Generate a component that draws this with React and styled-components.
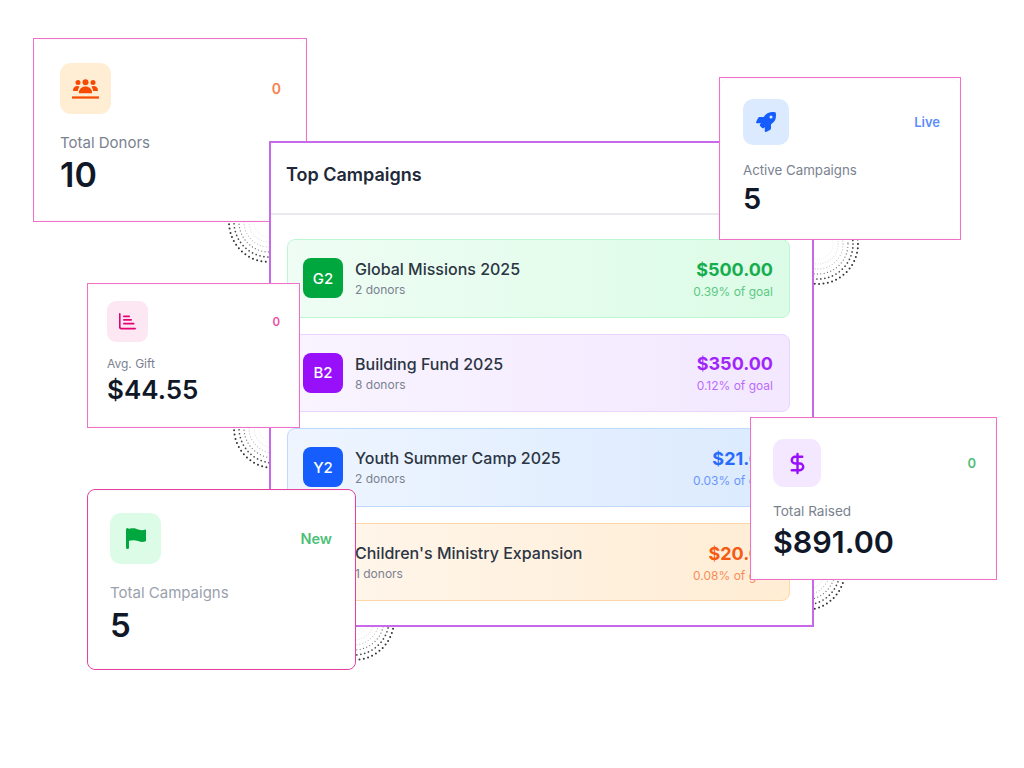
import React from 'react'
import styled, { createGlobalStyle } from 'styled-components'
import { FaRocket } from 'react-icons/fa'
import { DollarSign } from 'lucide-react'

const GlobalStyle = createGlobalStyle`
  html, body {
    margin: 0;
    background: #fff;
    font-family: Inter, 'Liberation Sans', sans-serif;
  }
`

const colors = {
  green: { main: '#00a63e', soft: '#dcfce7', pale: '#effdf4', line: '#bbf7d0' },
  purple: { main: '#9810fa', soft: '#f3e8ff', pale: '#f9f4ff', line: '#e9d5ff' },
  blue: { main: '#155dfc', soft: '#dbeafe', pale: '#eef5ff', line: '#bedbff' },
  orange: { main: '#f54a00', soft: '#ffedd4', pale: '#fff6ec', line: '#ffd6a7' },
  pink: { main: '#e60076', soft: '#fce7f3', pale: '#fdf2f8', line: '#fccee8' },
}

const campaigns = [
  { code: 'G2', name: 'Global Missions 2025', donors: '2 donors', amount: '$500.00', goal: '0.39% of goal', color: 'green' },
  { code: 'B2', name: 'Building Fund 2025', donors: '8 donors', amount: '$350.00', goal: '0.12% of goal', color: 'purple' },
  { code: 'Y2', name: 'Youth Summer Camp 2025', donors: '2 donors', amount: '$21.00', goal: '0.03% of goal', color: 'blue' },
  { code: 'C2', name: "Children's Ministry Expansion", donors: '1 donors', amount: '$20.00', goal: '0.08% of goal', color: 'orange' },
]

const Stage = styled.div`
  position: relative;
  width: 1024px;
  height: 768px;
  overflow: hidden;
  padding: 141px 0 0 269px;
  box-sizing: border-box;
`

const Panel = styled.section`
  position: relative;
  width: 545px;
  height: 486px;
  box-sizing: border-box;
  border: 2px solid #c968e8;
  background: #fff;
`

const PanelHeader = styled.header`
  height: 72px;
  box-sizing: border-box;
  display: flex;
  align-items: center;
  padding: 0 0 8px 15px;
  border-bottom: 2px solid #e9eaee;
`

const PanelTitle = styled.h2`
  margin: 0;
  font-size: 18px;
  font-weight: 600;
  color: #1e2939;
`

const List = styled.div`
  display: flex;
  flex-direction: column;
  gap: 16px;
  padding: 24px 22px 0 16px;
`

const Row = styled.div`
  height: 78.6px;
  box-sizing: border-box;
  display: flex;
  align-items: center;
  padding: 0 16px 0 15px;
  border-radius: 8px;
  border: 1px solid ${(p) => colors[p.$color].line};
  background: linear-gradient(90deg, ${(p) => colors[p.$color].pale}, ${(p) => colors[p.$color].soft});
`

const Code = styled.div`
  width: 40px;
  height: 40px;
  flex: none;
  border-radius: 8px;
  display: flex;
  align-items: center;
  justify-content: center;
  margin-right: 12px;
  color: #fff;
  font-size: 15px;
  font-weight: 500;
  background: ${(p) => colors[p.$color].main};
`

const RowText = styled.div`
  flex: 1;
`

const RowName = styled.div`
  font-size: 16px;
  font-weight: 500;
  line-height: 20px;
  color: #2b3543;
`

const RowSub = styled.div`
  margin-top: 3px;
  font-size: 12px;
  line-height: 15px;
  color: #7a8290;
`

const RowMoney = styled.div`
  padding-top: 1px;
  text-align: right;
`

const Amount = styled.div`
  font-size: 18px;
  font-weight: 700;
  line-height: 24px;
  opacity: 0.9;
  color: ${(p) => colors[p.$color].main};
`

const Goal = styled.div`
  margin-top: 2px;
  font-size: 12px;
  line-height: 16px;
  opacity: 0.6;
  color: ${(p) => colors[p.$color].main};
`

const Card = styled.article`
  position: absolute;
  left: ${(p) => p.$x}px;
  top: ${(p) => p.$y}px;
  width: ${(p) => p.$w}px;
  height: ${(p) => p.$h}px;
  box-sizing: border-box;
  padding: ${(p) => p.$pad};
  background: #fff;
  border: 1px solid ${(p) => (p.$round ? '#e8409f' : '#f26fc6')};
  border-radius: ${(p) => (p.$round ? '8px' : '0')};

  /* the card's own soft corner shows just inside the pink outline */
  &::before {
    content: '';
    position: absolute;
    inset: 0;
    border: 1px solid #f9f9fb;
    border-radius: 8px;
    pointer-events: none;
  }
`

const CardTop = styled.div`
  display: flex;
  align-items: center;
  justify-content: space-between;
`

const IconBox = styled.div`
  width: ${(p) => p.$size}px;
  height: ${(p) => p.$size}px;
  border-radius: ${(p) => Math.round(p.$size / 4.5)}px;
  display: flex;
  align-items: center;
  justify-content: center;
  font-size: ${(p) => p.$glyph}px;
  color: ${(p) => colors[p.$color].main};
  background: ${(p) => colors[p.$color].soft};
`

const Badge = styled.span`
  font-size: ${(p) => p.$size}px;
  font-weight: 600;
  opacity: 0.7;
  color: ${(p) => colors[p.$color].main};
`

const Label = styled.div`
  margin-top: ${(p) => p.$gap}px;
  font-size: ${(p) => p.$size}px;
  line-height: 1.4;
  color: ${(p) => (p.$muted ? '#9aa1ad' : '#7a8290')};
`

const Value = styled.div`
  margin-top: ${(p) => p.$gap}px;
  font-size: ${(p) => p.$size}px;
  font-weight: 600;
  line-height: 1.25;
  color: #101828;
`

const Rings = styled.svg`
  position: absolute;
  left: ${(p) => p.$x - 41}px;
  top: ${(p) => p.$y - 41}px;
  width: 82px;
  height: 82px;
`

function DotRings({ x, y }) {
  const rings = [
    { r: 40, w: 2, gap: 4.4, c: '#333' },
    { r: 35, w: 1.7, gap: 4, c: '#444' },
    { r: 30, w: 1.3, gap: 3.4, c: '#777' },
    { r: 25, w: 1, gap: 3, c: '#aaa' },
    { r: 20, w: 0.8, gap: 2.6, c: '#ccc' },
    { r: 15, w: 0.6, gap: 2.2, c: '#e2e2e2' },
  ]
  return (
    <Rings $x={x} $y={y} viewBox="0 0 82 82">
      {rings.map((ring) => (
        <circle
          key={ring.r}
          cx="41"
          cy="41"
          r={ring.r}
          fill="none"
          stroke={ring.c}
          strokeWidth={ring.w}
          strokeLinecap="round"
          strokeDasharray={`0 ${ring.gap}`}
        />
      ))}
    </Rings>
  )
}

// three people standing on a line
function PeopleIcon() {
  return (
    <svg width="27" height="20" viewBox="0 0 27 20" fill="currentColor">
      <circle cx="6" cy="3.4" r="2.5" />
      <circle cx="13.5" cy="3.2" r="3" />
      <circle cx="21" cy="3.4" r="2.5" />
      <path d="M1 11.5C1 8.6 3 7 5.2 7c1 0 1.8.3 2.4.8C6.6 9 6 10.2 5.9 12H2.2C1.5 12 1 12 1 11.5Z" />
      <path d="M26 11.5C26 8.6 24 7 21.8 7c-1 0-1.8.3-2.4.8 1 1.2 1.6 2.4 1.7 4.2h3.7c.7 0 1.2 0 1.2-.5Z" />
      <path d="M7.4 14.2c-.3 0-.5-.2-.5-.5C6.900 10.200 9.800 7.600 13.500 7.600s6.600 2.600 6.600 6.100c0 .3-.2.5-.5.5Z" />
      <rect x="0" y="17.400" width="27" height="2.200" />
    </svg>
  )
}

// axis with three left-aligned bars
function BarsIcon() {
  return (
    <svg width="17" height="17" viewBox="0 0 17 17" fill="currentColor">
      <path d="M0 .8C0 .3.3 0 .8 0s.8.3.8.8v13.200c0 .5.3.8.8.8h13.800c.5 0 .8.3.8.8s-.3.800-.8.800H2.200C.9 16.400 0 15.500 0 14.200Z" />
      <rect x="4" y="2.600" width="7" height="1.700" rx=".8" />
      <rect x="4" y="6" width="9" height="1.700" rx=".8" />
      <rect x="4" y="9.800" width="11.500" height="1.700" rx=".8" />
    </svg>
  )
}

function FlagIcon() {
  return (
    <svg width="20" height="21" viewBox="0 0 20 21" fill="currentColor">
      <rect x="0" y="0" width="3" height="21" rx="1.500" />
      <path d="M2 1.500C6-.5 9 .5 12 1.500s5 1 8 0V13c-3 1.500-5 1-8 0s-6-1-10 0Z" />
    </svg>
  )
}

export default function App() {
  return (
    <Stage>
      <GlobalStyle />
      <DotRings x={269} y={222} />
      <DotRings x={818} y={244} />
      <DotRings x={274} y={428} />
      <DotRings x={354} y={620} />
      <DotRings x={805} y={570} />

      <Card $x={33} $y={38} $w={274} $h={184} $pad="24px 25px 0 26px">
        <CardTop>
          <IconBox $size={51} $color="orange"><PeopleIcon /></IconBox>
          <Badge $size={14} $color="orange">0</Badge>
        </CardTop>
        <Label $gap={18} $size={15}>Total Donors</Label>
        <Value $size={34} $gap={1}>10</Value>
      </Card>

      <Panel>
        <PanelHeader>
          <PanelTitle>Top Campaigns</PanelTitle>
        </PanelHeader>
        <List>
          {campaigns.map((c) => (
            <Row key={c.code} $color={c.color}>
              <Code $color={c.color}>{c.code}</Code>
              <RowText>
                <RowName>{c.name}</RowName>
                <RowSub>{c.donors}</RowSub>
              </RowText>
              <RowMoney>
                <Amount $color={c.color}>{c.amount}</Amount>
                <Goal $color={c.color}>{c.goal}</Goal>
              </RowMoney>
            </Row>
          ))}
        </List>
      </Panel>

      <Card $x={719} $y={77} $w={242} $h={163} $pad="21px 20px 0 23px">
        <CardTop>
          <IconBox $size={46} $glyph={20} $color="blue"><FaRocket /></IconBox>
          <Badge $size={13} $color="blue">Live</Badge>
        </CardTop>
        <Label $gap={16} $size={13.3}>Active Campaigns</Label>
        <Value $size={29} $gap={1}>5</Value>
      </Card>

      <Card $x={87} $y={283} $w={213} $h={145} $pad="17px 19px 0 19px">
        <CardTop>
          <IconBox $size={41} $color="pink"><BarsIcon /></IconBox>
          <Badge $size={11.5} $color="pink">0</Badge>
        </CardTop>
        <Label $gap={14} $size={12}>Avg. Gift</Label>
        <Value $size={26} $gap={1}>$44.55</Value>
      </Card>

      <Card $round $x={87} $y={489} $w={269} $h={181} $pad="23px 23px 0 22px">
        <CardTop>
          <IconBox $size={51} $color="green"><FlagIcon /></IconBox>
          <Badge $size={14.5} $color="green">New</Badge>
        </CardTop>
        <Label $muted $gap={18} $size={15}>Total Campaigns</Label>
        <Value $size={33} $gap={2}>5</Value>
      </Card>

      <Card $x={750} $y={417} $w={247} $h={163} $pad="21px 20px 0 22px">
        <CardTop>
          <IconBox $size={48} $color="purple"><DollarSign size={23} strokeWidth={2.5} /></IconBox>
          <Badge $size={13} $color="green">0</Badge>
        </CardTop>
        <Label $gap={15} $size={13.6}>Total Raised</Label>
        <Value $size={30.5} $gap={2}>$891.00</Value>
      </Card>
    </Stage>
  )
}
